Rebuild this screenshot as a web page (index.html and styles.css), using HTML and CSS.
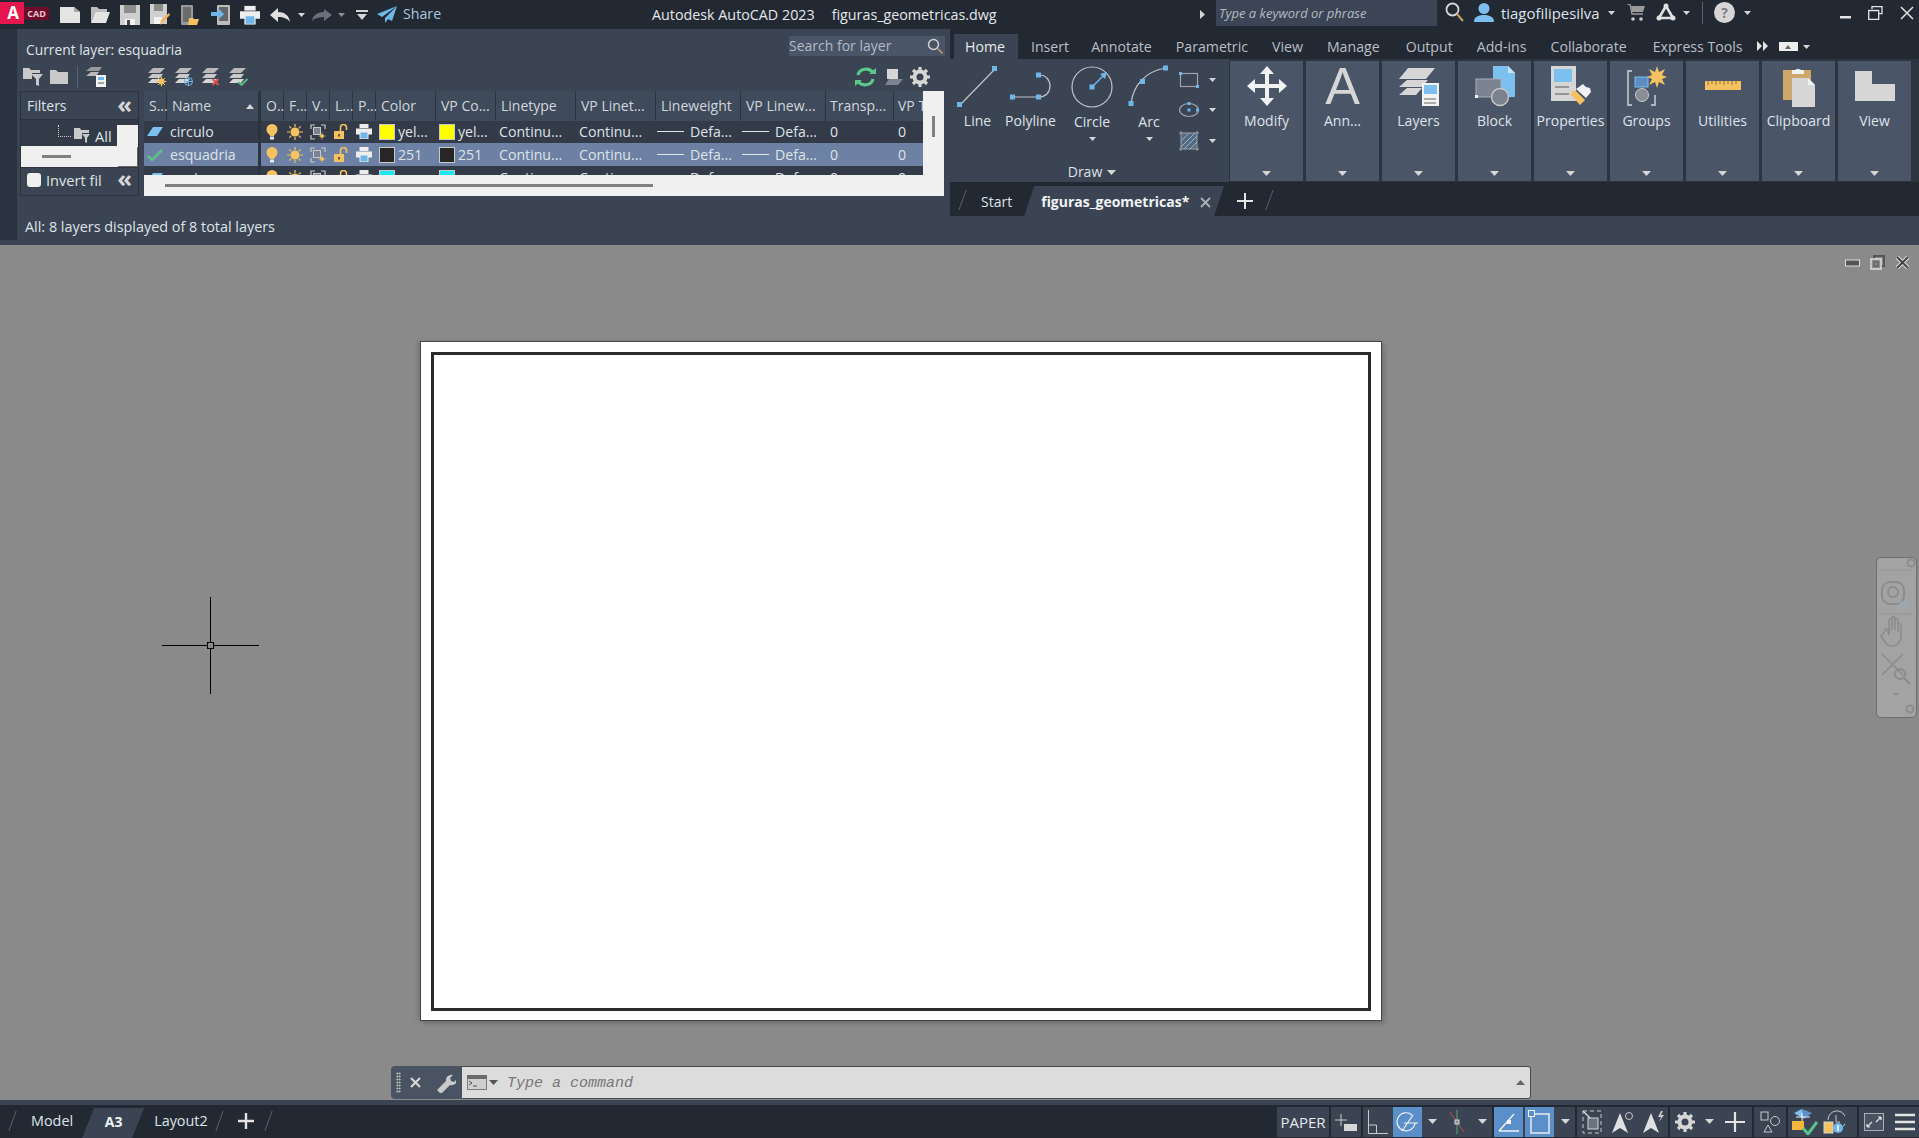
FILE: index.html
```html
<!DOCTYPE html>
<html lang="en">
<head>
<meta charset="utf-8">
<title>Autodesk AutoCAD 2023 - figuras_geometricas.dwg</title>
<link rel="stylesheet" href="styles.css">
</head>
<body>
<svg class="defs" width="0" height="0">
  <symbol id="stack" viewBox="0 0 20 20"><path d="M6 1h12l-5 5H1z" fill="#b9b9b9"/><path d="M5 7h11l-3 4H1z" fill="#c9c9c9"/><path d="M5 12h11l-3 4H1z" fill="#d6d6d6"/></symbol>
  <symbol id="bulb" viewBox="0 0 14 16"><circle cx="7" cy="5.5" r="5.5" fill="#f5c261"/><path d="M4 9h6l-1 3H5z" fill="#f5c261"/><rect x="5" y="12.5" width="4" height="3" fill="#e8e8e8"/></symbol>
  <symbol id="sun" viewBox="0 0 16 16"><circle cx="8" cy="8" r="4.5" fill="#f5c261"/><path d="M8 0v3M8 13v3M0 8h3M13 8h3M2.3 2.3l2 2M11.7 11.7l2 2M2.3 13.7l2-2M11.7 4.3l2-2" stroke="#f5c261" stroke-width="1.2"/></symbol>
  <symbol id="vpf" viewBox="0 0 16 16"><path d="M1 5V1h4M11 1h4v4M1 11v4h4" fill="none" stroke="#c9c9c9" stroke-width="1.2"/><rect x="3.500" y="3.500" width="7" height="7" fill="#7b8390" stroke="#c9c9c9"/><circle cx="12" cy="12" r="2" fill="#f5c261"/><path d="M12 8.500v1M12 14.500v1M8.500 12h1M14.500 12h1" stroke="#f5c261"/></symbol>
  <symbol id="lock" viewBox="0 0 14 15"><rect x="0" y="7" width="10" height="8" fill="#f5c261"/><path d="M6.500 7V3.500a3 3 0 0 1 6 0V6" fill="none" stroke="#f5c261" stroke-width="1.600"/><rect x="4" y="10" width="2" height="2.500" fill="#6d5a2e"/></symbol>
  <symbol id="printer" viewBox="0 0 16 15"><rect x="3.500" y="0" width="9" height="4" fill="#eee"/><rect x="0" y="4.500" width="16" height="6" fill="#eee"/><rect x="4" y="8" width="8" height="7" fill="#6fb7e9" stroke="#eee"/></symbol>
  <symbol id="arrowcaret" viewBox="0 0 9 5"><path d="M0 0h9L4.500 5z" fill="#d6d6d6"/></symbol>
</svg>

<header class="titlebar">
  <div class="qat">
    <span class="logo-a">A</span><span class="logo-cad">CAD</span>
    <span class="qb qb-first"><svg width="20" height="16" viewBox="0 0 20 16"><path d="M0 0h14l6 5v11H0z" fill="#e4e4e4"/><path d="M14 0v5h6z" fill="#a9a9a9"/></svg></span>
    <span class="qb"><svg width="20" height="16" viewBox="0 0 20 16"><path d="M1 0h6l2 2h8v3H5L1 16z" fill="#bdbdbd"/><path d="M5 5h15l-4 11H1z" fill="#e4e4e4"/></svg></span>
    <span class="qb"><svg width="20" height="20" viewBox="0 0 20 20"><path d="M0 0h20v20H0z" fill="#cfcfcf"/><rect x="4" y="0" width="12" height="8" fill="#8c8c8c"/><rect x="5" y="14" width="10" height="6" fill="#f2f2f2"/><rect x="7" y="15" width="3" height="5" fill="#444"/></svg></span>
    <span class="qb"><svg width="20" height="22" viewBox="0 0 20 22"><path d="M0 0h17v20H0z" fill="#cfcfcf"/><rect x="4" y="0" width="9" height="7" fill="#8c8c8c"/><rect x="4" y="13" width="8" height="7" fill="#f2f2f2"/><path d="M10 21l1-5 8-7 1 2-8 8z" fill="#f0b35a"/></svg></span>
    <span class="qb"><svg width="20" height="20" viewBox="0 0 20 20"><rect x="1" y="0" width="12" height="20" rx="1" fill="#9a9a9a"/><rect x="3" y="2" width="8" height="15" fill="#6c6c6c"/><path d="M9 13h4l1 1h5l-2 6H8z" fill="#f5c261"/></svg></span>
    <span class="qb qb-pub"><svg width="20" height="20" viewBox="0 0 20 20"><rect x="6" y="0" width="13" height="20" rx="1" fill="#bdbdbd"/><rect x="8" y="2" width="9" height="14" fill="#666"/><path d="M0 7h7V3l6 6-6 6v-4H0z" fill="#6fb7e9"/></svg></span>
    <span class="qb qb-print"><svg width="20" height="20" viewBox="0 0 16 15"><use href="#printer"/></svg></span>
    <span class="qb qb-undo"><svg width="20" height="14" viewBox="0 0 20 14"><path d="M8 0v4c6 0 11 3 12 10-2-3-6-5-12-5v5L0 7z" fill="#e0e0e0"/></svg></span>
    <svg class="qc qc-u" width="7" height="4" viewBox="0 0 9 5"><use href="#arrowcaret"/></svg>
    <span class="qb qb-redo"><svg width="20" height="12" viewBox="0 0 20 12"><path d="M12 0v3C6 3 1 6 0 12c3-3 7-4 12-4v4l8-6z" fill="#6a717c"/></svg></span>
    <svg class="qc" width="7" height="4" viewBox="0 0 9 5"><path d="M0 0h9L4.500 5z" fill="#8a909a"/></svg>
    <span class="qa"><svg width="12" height="10" viewBox="0 0 12 10"><rect width="12" height="2" fill="#d6d6d6"/><path d="M1 4h10L6 10z" fill="#d6d6d6"/></svg></span>
    <svg class="share-ic" width="20" height="17" viewBox="0 0 20 17"><path d="M20 0L0 8l5 3L20 0 8 12v5l3-4 4 2z" fill="#6fb7e9"/></svg>
    <span class="share">Share</span>
  </div>
  <div class="tb-title"><span class="tb-app">Autodesk AutoCAD 2023</span><span>figuras_geometricas.dwg</span></div>
  <svg class="tb-arrow" width="5" height="9" viewBox="0 0 5 9"><path d="M0 0l5 4.500L0 9z" fill="#d6d6d6"/></svg>
  <div class="tb-search">Type a keyword or phrase</div>
  <svg class="tb-mag" width="19" height="20" viewBox="0 0 19 20"><circle cx="7.500" cy="7.500" r="6" fill="none" stroke="#d6d6d6" stroke-width="1.800"/><path d="M12 12l6 7" stroke="#c8a35e" stroke-width="2"/></svg>
  <svg class="tb-user" width="20" height="19" viewBox="0 0 20 19"><circle cx="10" cy="5.500" r="5.500" fill="#7cc0f0"/><path d="M0 19c0-5 4-7 10-7s10 2 10 7z" fill="#7cc0f0"/></svg>
  <span class="tb-name">tiagofilipesilva</span>
  <svg class="tb-c1" width="7" height="4" viewBox="0 0 9 5"><use href="#arrowcaret"/></svg>
  <svg class="tb-cart" width="18" height="17" viewBox="0 0 18 17"><path d="M0 0h3l2 10h11" fill="none" stroke="#9a9a9a" stroke-width="1.400"/><path d="M4 2h14l-2 6H5z" fill="#9a9a9a"/><circle cx="6" cy="15" r="1.800" fill="#c9c9c9"/><circle cx="14" cy="15" r="1.800" fill="#c9c9c9"/></svg>
  <svg class="tb-a360" width="20" height="18" viewBox="0 0 20 18"><path d="M10 3L3 15h14z" fill="none" stroke="#e0e0e0" stroke-width="2.600"/><circle cx="10" cy="3" r="2.500" fill="#e0e0e0"/><circle cx="3" cy="15" r="2.500" fill="#e0e0e0"/><circle cx="17" cy="15" r="2.500" fill="#e0e0e0"/></svg>
  <svg class="tb-c2" width="7" height="4" viewBox="0 0 9 5"><use href="#arrowcaret"/></svg>
  <span class="tb-sep"></span>
  <span class="tb-help">?</span>
  <svg class="tb-c3" width="7" height="4" viewBox="0 0 9 5"><use href="#arrowcaret"/></svg>
  <span class="win-btns">
    <svg width="11" height="3" viewBox="0 0 11 3"><rect width="11" height="2.500" fill="#e4e4e4"/></svg>
    <svg width="15" height="14" viewBox="0 0 15 14"><path d="M4 3V.7h10v7h-3M.7 4.500h10v8.800H.7z" fill="none" stroke="#e4e4e4" stroke-width="1.300"/></svg>
    <svg width="14" height="14" viewBox="0 0 14 14"><path d="M1 1l12 12M13 1L1 13" stroke="#e4e4e4" stroke-width="1.500"/></svg>
  </span>
</header>

<section class="upper">
  <div class="strip"><span class="strip-grip"></span></div>

  <aside class="palette">
    <div class="pal-top">
      <span class="cur-layer">Current layer: esquadria</span>
      <div class="pal-search"><span>Search for layer</span>
        <svg width="16" height="16" viewBox="0 0 16 16"><circle cx="6.500" cy="6.500" r="5" fill="none" stroke="#d6d6d6" stroke-width="1.400"/><path d="M10.500 10.500l5 5" stroke="#b39a68" stroke-width="1.600"/></svg>
      </div>
    </div>
    <div class="pal-tools">
      <svg width="20" height="20" viewBox="0 0 20 20"><path d="M0 1h6l2 2h9v3H9v6H0z" fill="#c9c9c9"/><path d="M8 7h12l-4 5v7l-3-1v-6z" fill="#c9c9c9"/></svg>
      <svg class="t-folder" width="18" height="14" viewBox="0 0 18 14"><path d="M0 0h6l2 2h10v12H0z" fill="#c9c9c9"/></svg>
      <span class="t-sep"></span>
      <svg width="20" height="20" viewBox="0 0 20 20"><path d="M5 0h11l-3 4H0z" fill="#9a9a9a"/><path d="M5 5h8l-3 4H0z" fill="#b9b9b9"/><rect x="10" y="8" width="10" height="12" fill="#f2f2f2"/><rect x="12" y="10" width="6" height="3" fill="#6fb7e9"/><path d="M12 16h6" stroke="#555"/></svg>
      <svg class="t-new" width="20" height="20" viewBox="0 0 20 20"><use href="#stack"/><circle cx="14.500" cy="14.500" r="3" fill="#f5c261"/><path d="M14.500 9.500v10M9.500 14.500h10M11 11l7 7M18 11l-7 7" stroke="#f5c261"/></svg>
      <svg width="20" height="20" viewBox="0 0 20 20"><use href="#stack"/><circle cx="14.500" cy="14.500" r="4" fill="none" stroke="#6fb7e9"/><path d="M14.500 10.500v8M10.500 14.500h8" stroke="#6fb7e9"/></svg>
      <svg width="20" height="20" viewBox="0 0 20 20"><use href="#stack"/><path d="M11.500 12l6 6M17.500 12l-6 6" stroke="#d9534f" stroke-width="2"/></svg>
      <svg width="20" height="20" viewBox="0 0 20 20"><use href="#stack"/><path d="M10.500 15l3 3 6-6" fill="none" stroke="#5bc08a" stroke-width="1.800"/></svg>
      <span class="t-spring"></span>
      <svg width="21" height="20" viewBox="0 0 21 20"><path d="M3 8a8 7 0 0 1 15-2" fill="none" stroke="#5bc98a" stroke-width="3.200"/><path d="M18 12a8 7 0 0 1-15 2" fill="none" stroke="#5bc98a" stroke-width="3.200"/><path d="M14 7h7V1zM7 13H0v6z" fill="#5bc98a"/></svg>
      <svg class="t-vp" width="18" height="16" viewBox="0 0 18 16"><rect x="2" y="0" width="11" height="10" fill="#d6d6d6"/><path d="M4 10h14l-5 6H0z" fill="#7b8390"/></svg>
      <svg class="t-gear" width="20" height="20" viewBox="0 0 20 20"><circle cx="10" cy="10" r="5.500" fill="none" stroke="#d6d6d6" stroke-width="4"/><path d="M10 0v20M0 10h20M3 3l14 14M17 3L3 17" stroke="#d6d6d6" stroke-width="3.200" stroke-dasharray="3.500 13 3.500 0"/></svg>
    </div>

    <div class="pal-body">
      <div class="filters">
        <div class="f-head"><span>Filters</span><span class="dbl">&laquo;</span></div>
        <div class="f-tree">
          <div class="f-tree-top">
            <span class="f-dots"></span>
            <svg class="f-fold" width="16" height="15" viewBox="0 0 16 15"><path d="M0 0h6l1 2h8v3H8v6H0z" fill="#c9c9c9"/><path d="M8 6h8l-3 4v5l-2-1v-4z" fill="#c9c9c9"/></svg>
            <span class="f-all">All</span>
            <span class="f-patch"></span>
          </div>
          <div class="f-tree-bot"><span class="f-thumb"></span><span class="f-corner"></span></div>
        </div>
        <div class="f-inv"><span class="f-check"></span><span class="f-inv-t">Invert fil</span><span class="dbl">&laquo;</span></div>
      </div>

      <div class="grid-wrap">
        <div class="table">
          <div class="row head">
            <span>S...</span><span class="name-h">Name<i class="sort"></i></span><b></b><span>O..</span><span>F...</span><span>V..</span><span>L...</span><span>P...</span><span>Color</span><span>VP Co...</span><span>Linetype</span><span>VP Linet...</span><span>Lineweight</span><span>VP Linew...</span><span>Transp...</span><span class="vpt">VP T</span>
          </div>
          <div class="row r1">
            <span class="ic"><svg width="16" height="9" viewBox="0 0 16 9"><path d="M6 0h10L10 9H0z" fill="#7cc0f0"/></svg></span><span class="nm">circulo</span><b></b>
            <span class="ic"><svg width="14" height="16"><use href="#bulb"/></svg></span><span class="ic"><svg width="16" height="16"><use href="#sun"/></svg></span><span class="ic"><svg width="16" height="16"><use href="#vpf"/></svg></span><span class="ic"><svg width="14" height="15"><use href="#lock"/></svg></span><span class="ic"><svg width="16" height="15"><use href="#printer"/></svg></span>
            <span class="col"><i class="sw yel"></i>yel...</span><span class="col"><i class="sw yel"></i>yel...</span><span>Continu...</span><span>Continu...</span><span class="lw"><i class="ln"></i>Defa...</span><span class="lw"><i class="ln"></i>Defa...</span><span>0</span><span>0</span>
          </div>
          <div class="row r2">
            <span class="ic"><svg width="16" height="12" viewBox="0 0 16 12"><path d="M1 7l4 4L15 1" fill="none" stroke="#5bc08a" stroke-width="2.600"/></svg></span><span class="nm">esquadria</span><b></b>
            <span class="ic"><svg width="14" height="16"><use href="#bulb"/></svg></span><span class="ic"><svg width="16" height="16"><use href="#sun"/></svg></span><span class="ic"><svg width="16" height="16"><use href="#vpf"/></svg></span><span class="ic"><svg width="14" height="15"><use href="#lock"/></svg></span><span class="ic"><svg width="16" height="15"><use href="#printer"/></svg></span>
            <span class="col"><i class="sw blk"></i>251</span><span class="col"><i class="sw blk"></i>251</span><span>Continu...</span><span>Continu...</span><span class="lw"><i class="ln"></i>Defa...</span><span class="lw"><i class="ln"></i>Defa...</span><span>0</span><span>0</span>
          </div>
          <div class="row r1">
            <span class="ic"><svg width="16" height="9" viewBox="0 0 16 9"><path d="M6 0h10L10 9H0z" fill="#7cc0f0"/></svg></span><span class="nm">contorno</span><b></b>
            <span class="ic"><svg width="14" height="16"><use href="#bulb"/></svg></span><span class="ic"><svg width="16" height="16"><use href="#sun"/></svg></span><span class="ic"><svg width="16" height="16"><use href="#vpf"/></svg></span><span class="ic"><svg width="14" height="15"><use href="#lock"/></svg></span><span class="ic"><svg width="16" height="15"><use href="#printer"/></svg></span>
            <span class="col"><i class="sw cya"></i>cyan</span><span class="col"><i class="sw cya"></i>cyan</span><span>Continu...</span><span>Continu...</span><span class="lw"><i class="ln"></i>Defa...</span><span class="lw"><i class="ln"></i>Defa...</span><span>0</span><span>0</span>
          </div>
        </div>
        <div class="vscroll"><span class="vthumb"></span></div>
        <div class="hscroll"><span class="hthumb"></span></div>
      </div>
    </div>
    <div class="pal-status">All: 8 layers displayed of 8 total layers</div>
  </aside>

  <div class="ribbon">
    <nav class="rtabs">
      <span class="rtab on">Home</span><span class="rtab">Insert</span><span class="rtab rt-ann">Annotate</span><span class="rtab">Parametric</span><span class="rtab">View</span><span class="rtab">Manage</span><span class="rtab rt-out">Output</span><span class="rtab">Add-ins</span><span class="rtab">Collaborate</span><span class="rtab rt-exp">Express Tools</span>
      <svg class="r-more" width="11" height="10" viewBox="0 0 11 10"><path d="M0 0l5 5-5 5zM6 0l5 5-5 5z" fill="#e4e4e4"/></svg>
      <span class="r-min"><i></i></span>
      <svg class="r-minc" width="7" height="4" viewBox="0 0 9 5"><use href="#arrowcaret"/></svg>
    </nav>
    <div class="rpanels">
      <div class="draw">
        <div class="draw-tools">
          <div class="tool t1">
            <svg width="42" height="44" viewBox="0 0 42 44"><path d="M3 40L38 4" stroke="#bfc4ca" stroke-width="1.200"/><rect x="0" y="37" width="5" height="5" fill="#6fb7e9"/><rect x="35" y="1" width="5" height="5" fill="#6fb7e9"/></svg>
            <span>Line</span>
          </div>
          <div class="tool t2">
            <svg width="42" height="44" viewBox="0 0 42 44"><path d="M3 32h26c7 0 11-5 11-11s-4-11-11-11" fill="none" stroke="#bfc4ca" stroke-width="1.200"/><rect x="0" y="29.500" width="5" height="5" fill="#6fb7e9"/><rect x="26" y="29.500" width="5" height="5" fill="#6fb7e9"/><rect x="26" y="7.500" width="5" height="5" fill="#6fb7e9"/></svg>
            <span>Polyline</span>
          </div>
          <div class="tool t3">
            <svg width="42" height="44" viewBox="0 0 42 44"><circle cx="21" cy="22" r="20" fill="none" stroke="#bfc4ca" stroke-width="1.200"/><path d="M21 22L32 11" stroke="#6fb7e9" stroke-width="1.400"/><rect x="18.500" y="19.500" width="5" height="5" fill="#6fb7e9"/><path d="M36 7l-2 7-5-5z" fill="#6fb7e9"/></svg>
            <span>Circle</span><svg class="t-car" width="7" height="4" viewBox="0 0 9 5"><use href="#arrowcaret"/></svg>
          </div>
          <div class="tool t4">
            <svg width="42" height="44" viewBox="0 0 42 44"><path d="M3 39C5 20 18 6 38 3" fill="none" stroke="#bfc4ca" stroke-width="1.200"/><rect x="0.500" y="36" width="5" height="5" fill="#6fb7e9"/><rect x="12" y="14" width="5" height="5" fill="#6fb7e9"/><rect x="35" y="0.500" width="5" height="5" fill="#6fb7e9"/></svg>
            <span>Arc</span><svg class="t-car" width="7" height="4" viewBox="0 0 9 5"><use href="#arrowcaret"/></svg>
          </div>
          <div class="t-small">
            <div class="ts-row"><svg width="20" height="18" viewBox="0 0 20 18"><rect x="1.500" y="2.500" width="17" height="13" fill="none" stroke="#9ea4ac" stroke-width="1.200"/><rect x="0" y="1" width="3" height="3" fill="#6fb7e9"/><rect x="17" y="14" width="3" height="3" fill="#6fb7e9"/></svg><svg class="ts-car" width="7" height="4" viewBox="0 0 9 5"><use href="#arrowcaret"/></svg></div>
            <div class="ts-row"><svg width="20" height="18" viewBox="0 0 20 18"><ellipse cx="10" cy="9" rx="9.500" ry="6.500" fill="none" stroke="#9ea4ac" stroke-width="1.200"/><rect x="8.500" y="1" width="3" height="3" fill="#6fb7e9"/><rect x="8.500" y="7.500" width="3" height="3" fill="#6fb7e9"/><rect x="17" y="7.500" width="3" height="3" fill="#6fb7e9"/></svg><svg class="ts-car" width="7" height="4" viewBox="0 0 9 5"><use href="#arrowcaret"/></svg></div>
            <div class="ts-row"><svg width="20" height="20" viewBox="0 0 20 20"><rect x="2" y="2" width="16" height="16" fill="#56697f"/><path d="M2 10l8-8M2 16L16 2M5 18L18 5M11 18l7-7" stroke="#8fb6d6"/><path d="M0 2h20M0 18h20M2 0v20M18 0v20" stroke="#9ea4ac"/></svg><svg class="ts-car" width="7" height="4" viewBox="0 0 9 5"><use href="#arrowcaret"/></svg></div>
          </div>
        </div>
        <div class="draw-foot">Draw <svg width="9" height="5" viewBox="0 0 9 5"><use href="#arrowcaret"/></svg></div>
      </div>

      <div class="pnl">
        <div class="pnl-ic"><svg width="40" height="40" viewBox="0 0 40 40"><path d="M20 0l7 8h-5v10h10v-5l8 7-8 7v-5H22v10h5l-7 8-7-8h5V22H8v5l-8-7 8-7v5h10V8h-5z" fill="#f2f2f2"/></svg></div>
        <span>Modify</span><svg class="car" width="9" height="5" viewBox="0 0 9 5"><use href="#arrowcaret"/></svg>
      </div>
      <div class="pnl">
        <div class="pnl-ic"><span class="big-a">A</span></div>
        <span>Ann...</span><svg class="car" width="9" height="5" viewBox="0 0 9 5"><use href="#arrowcaret"/></svg>
      </div>
      <div class="pnl">
        <div class="pnl-ic"><svg width="40" height="40" viewBox="0 0 40 40"><path d="M9 2h27l-9 11H0z" fill="#d6d6d6"/><path d="M8 14h21l-6 7H0z" fill="#d6d6d6"/><path d="M8 22h15l-6 7H0z" fill="#d6d6d6"/><rect x="23" y="17" width="17" height="23" fill="#f2f2f2"/><rect x="25" y="19" width="13" height="9" fill="#7cc0f0"/><path d="M25 33h12M25 37h12" stroke="#666"/></svg></div>
        <span>Layers</span><svg class="car" width="9" height="5" viewBox="0 0 9 5"><use href="#arrowcaret"/></svg>
      </div>
      <div class="pnl">
        <div class="pnl-ic"><svg width="40" height="42" viewBox="0 0 40 42"><path d="M18 1h15l7 7v24H18z" fill="#7cc0f0"/><path d="M33 1l7 7h-7z" fill="#c6e4f8"/><rect x="1" y="14" width="25" height="18" fill="#7b8390" stroke="#a9aeb5"/><circle cx="25" cy="32" r="8.500" fill="#7b8390" stroke="#c9c9c9" stroke-width="1.400"/><rect x="0" y="30" width="3" height="3" fill="#f2f2f2"/></svg></div>
        <span>Block</span><svg class="car" width="9" height="5" viewBox="0 0 9 5"><use href="#arrowcaret"/></svg>
      </div>
      <div class="pnl">
        <div class="pnl-ic"><svg width="40" height="42" viewBox="0 0 40 42"><rect x="0" y="1" width="25" height="35" fill="#d6d6d6"/><rect x="3" y="4" width="18" height="13" fill="#7cc0f0"/><path d="M4 22h14M4 29h14" stroke="#555" stroke-width="1.200"/><path d="M19 29l5-4 10 10-5 5z" fill="#f5c261"/><path d="M25 24l7-5 3 3 4 1 1 4-5 6z" fill="#f2f2f2"/></svg></div>
        <span>Properties</span><svg class="car" width="9" height="5" viewBox="0 0 9 5"><use href="#arrowcaret"/></svg>
      </div>
      <div class="pnl">
        <div class="pnl-ic"><svg width="40" height="42" viewBox="0 0 40 42"><path d="M5 6H1v34h4M28 30v10h-4" fill="none" stroke="#d6d6d6" stroke-width="1.400"/><rect x="8" y="12" width="13" height="10" fill="#5b8fc2" stroke="#7cc0f0"/><circle cx="15" cy="30" r="6.500" fill="#8a8f97" stroke="#c9c9c9"/><path d="M30 1l2 6 6-3-3 6 5 2-5 2 3 6-6-3-2 6-2-6-6 3 3-6-5-2 5-2-3-6 6 3z" fill="#f5c261"/></svg></div>
        <span>Groups</span><svg class="car" width="9" height="5" viewBox="0 0 9 5"><use href="#arrowcaret"/></svg>
      </div>
      <div class="pnl">
        <div class="pnl-ic"><svg width="36" height="9" viewBox="0 0 36 9"><rect width="36" height="9" fill="#f5c261"/><path d="M3 0v4M7 0v3M11 0v4M15 0v3M19 0v4M23 0v3M27 0v4M31 0v3" stroke="#8f6f2c"/></svg></div>
        <span>Utilities</span><svg class="car" width="9" height="5" viewBox="0 0 9 5"><use href="#arrowcaret"/></svg>
      </div>
      <div class="pnl">
        <div class="pnl-ic"><svg width="32" height="42" viewBox="0 0 32 42"><rect x="0" y="5" width="28" height="30" fill="#cfa76a"/><path d="M9 5h3a4 3 0 0 1 6 0h3v4H9z" fill="#f2f2f2"/><path d="M9 13h16l7 7v22H9z" fill="#d6d6d6"/><path d="M25 13l7 7h-7z" fill="#f2f2f2"/></svg></div>
        <span>Clipboard</span><svg class="car" width="9" height="5" viewBox="0 0 9 5"><use href="#arrowcaret"/></svg>
      </div>
      <div class="pnl">
        <div class="pnl-ic"><svg width="40" height="30" viewBox="0 0 40 30"><path d="M0 0h17v13h23v17H0z" fill="#d6d6d6"/></svg></div>
        <span>View</span><svg class="car" width="9" height="5" viewBox="0 0 9 5"><use href="#arrowcaret"/></svg>
      </div>
    </div>
    <div class="dtabs">
      <i class="slash"></i>
      <span class="dt-start">Start</span>
      <div class="dt-on"><span>figuras_geometricas*</span><svg width="11" height="11" viewBox="0 0 11 11"><path d="M1 1l9 9M10 1l-9 9" stroke="#a9aeb5" stroke-width="2"/></svg></div>
      <svg class="dt-plus" width="16" height="16" viewBox="0 0 16 16"><path d="M8 0v16M0 8h16" stroke="#e4e4e4" stroke-width="2"/></svg>
      <i class="slash s2"></i>
    </div>
  </div>
</section>

<main class="canvas">
  <div class="paper"><div class="frame"></div></div>
  <div class="cross"><i class="cr-h"></i><i class="cr-v"></i><i class="cr-b"></i></div>
  <div class="vp-ctl">
    <svg width="15" height="9" viewBox="0 0 15 9"><rect x="0.500" y="2" width="14" height="6" fill="#555" stroke="#ddd"/></svg>
    <svg width="15" height="15" viewBox="0 0 15 15"><rect x="4" y="1" width="10" height="10" fill="none" stroke="#555" stroke-width="2"/><rect x="1" y="4" width="10" height="10" fill="#8a8a8a" stroke="#ddd" stroke-width="1.500"/><rect x="4" y="7" width="4" height="4" fill="none" stroke="#555"/></svg>
    <svg width="15" height="13" viewBox="0 0 15 13"><path d="M2 1l11 11M13 1L2 12" stroke="#ddd" stroke-width="4"/><path d="M2 1l11 11M13 1L2 12" stroke="#444" stroke-width="2"/></svg>
  </div>
  <div class="navbar">
    <svg width="41" height="161" viewBox="0 0 41 161">
      <circle cx="35" cy="6" r="3.500" fill="none" stroke="#8c8c8c" stroke-width="2"/>
      <path d="M3 13h34" stroke="#949494"/>
      <rect x="6" y="25" width="22" height="22" rx="8" fill="none" stroke="#8c8c8c" stroke-width="2"/>
      <circle cx="17" cy="35" r="5" fill="none" stroke="#8c8c8c" stroke-width="2"/>
      <text x="21" y="52" font-family="Open Sans" font-size="10" font-weight="700" fill="#98aabd">2D</text>
      <path d="M3 57h34" stroke="#949494"/>
      <path d="M9 74c0-3 2-3 3 0l1 4V64c0-3 3-3 3 0v9-11c0-3 3-3 3 0v11-9c0-3 3-3 3 0v11-6c0-3 3-3 3 0v10c0 6-4 10-9 10-6 0-7-4-11-10z" fill="none" stroke="#8c8c8c" stroke-width="1.600"/>
      <path d="M6 97l21 21M27 97L6 118" stroke="#8c8c8c" stroke-width="1.600"/>
      <circle cx="24" cy="117" r="5" fill="none" stroke="#8c8c8c" stroke-width="2"/>
      <path d="M28 121l6 6" stroke="#8c8c8c" stroke-width="2.400"/>
      <path d="M17 136h6l-3 3z" fill="#8c8c8c"/>
      <circle cx="34" cy="152" r="3.500" fill="none" stroke="#8c8c8c" stroke-width="2"/>
    </svg>
  </div>
  <div class="cmd">
    <div class="cmd-tools">
      <span class="cmd-grip"></span>
      <svg width="11" height="11" viewBox="0 0 11 11"><path d="M1 1l9 9M10 1l-9 9" stroke="#d6d6d6" stroke-width="2.200"/></svg>
      <svg width="20" height="20" viewBox="0 0 20 20"><path d="M1 17l9-9a5.500 5.500 0 0 1 7-6l-3 3 1 3 3 1 3-3a5.500 5.500 0 0 1-7 6l-9 9z" fill="#c9c9c9"/></svg>
    </div>
    <div class="cmd-input">
      <svg width="20" height="15" viewBox="0 0 20 15"><rect x="0.500" y="0.500" width="19" height="14" fill="#cfcfcf" stroke="#7c7c7c"/><rect x="0" y="0" width="20" height="4" fill="#6b6b6b"/><path d="M2 6l3 2-3 2M6 11h4" fill="none" stroke="#555"/></svg>
      <svg class="cmd-c" width="9" height="5" viewBox="0 0 9 5"><path d="M0 0h9L4.500 5z" fill="#555"/></svg>
      <span class="cmd-t">Type a command</span>
      <svg class="cmd-up" width="9" height="5" viewBox="0 0 9 5"><path d="M0 5h9L4.500 0z" fill="#666"/></svg>
    </div>
  </div>
</main>

<footer class="status">
  <div class="ltabs">
    <i class="slash"></i><span class="lt lt-m">Model</span><span class="lt-on"><span>A3</span></span><span class="lt lt-2">Layout2</span><i class="slash"></i>
    <svg class="lt-plus" width="16" height="16" viewBox="0 0 16 16"><path d="M8 0v16M0 8h16" stroke="#e4e4e4" stroke-width="2.400"/></svg>
    <i class="slash"></i>
  </div>
  <div class="sgroups">
    <div class="sg g1">PAPER</div>
    <div class="sg g2"><svg width="22" height="20" viewBox="0 0 22 20"><path d="M6 2v12M0 8h12" stroke="#c9c9c9"/><rect x="9" y="12" width="13" height="7" fill="#d6d6d6"/></svg></div>
    <div class="sg g3">
      <span class="sb"><svg width="20" height="24" viewBox="0 0 20 24"><path d="M.5 0v23.500H20M.5 15h8v8" fill="none" stroke="#c9c9c9"/></svg></span>
      <span class="sb on"><svg width="22" height="22" viewBox="0 0 22 22"><path d="M16 4A9 9 0 1 0 19 12" fill="none" stroke="#f2f2f2" stroke-width="1.200"/><path d="M6 20L17 4M8 12h14" stroke="#f2f2f2" stroke-width="1.200"/></svg></span>
      <span class="sc"><svg width="9" height="5" viewBox="0 0 9 5"><use href="#arrowcaret"/></svg></span>
      <span class="sb"><svg width="18" height="24" viewBox="0 0 18 24"><path d="M2 2l14 20" stroke="#c0504d"/><path d="M9 0v24" stroke="#57a67c"/><rect x="7" y="10" width="4" height="4" fill="#8a8f97" stroke="#d6d6d6"/></svg></span>
      <span class="sc"><svg width="9" height="5" viewBox="0 0 9 5"><use href="#arrowcaret"/></svg></span>
    </div>
    <div class="sg g4">
      <span class="sb on"><svg width="22" height="22" viewBox="0 0 22 22"><path d="M1 20h20M1 20L16 3" fill="none" stroke="#f2f2f2" stroke-width="1.400"/><rect x="9" y="9" width="4" height="4" fill="#f2f2f2"/></svg></span>
      <span class="sb on"><svg width="22" height="24" viewBox="0 0 22 24"><rect x="3" y="4" width="18" height="19" fill="none" stroke="#f2f2f2" stroke-width="1.400"/><rect x="0.500" y="0.500" width="6" height="6" fill="#5b8fc9" stroke="#f2f2f2"/></svg></span>
      <span class="sc"><svg width="9" height="5" viewBox="0 0 9 5"><use href="#arrowcaret"/></svg></span>
    </div>
    <div class="sg g5">
      <span class="sb"><svg width="20" height="24" viewBox="0 0 20 24"><path d="M1 1h18v22H1z" fill="none" stroke="#c9c9c9" stroke-dasharray="4 3"/><rect x="6" y="8" width="10" height="11" fill="#6b7381" stroke="#d6d6d6"/><path d="M1 1l7 7" stroke="#d6d6d6" stroke-width="1.400"/></svg></span>
      <span class="sb"><svg width="22" height="24" viewBox="0 0 22 24"><path d="M8 3l8 20-8-5-8 5z" fill="#e0e0e0"/><circle cx="17" cy="6" r="3.500" fill="none" stroke="#c9c9c9"/></svg></span>
      <span class="sb"><svg width="22" height="24" viewBox="0 0 22 24"><path d="M8 3l8 20-8-5-8 5z" fill="#e0e0e0"/><path d="M18 1l-3 6h3l-2 5 5-7h-3l2-4z" fill="#c9c9c9"/></svg></span>
    </div>
    <div class="sg g6">
      <span class="sb"><svg width="20" height="20" viewBox="0 0 20 20"><circle cx="10" cy="10" r="5.500" fill="none" stroke="#d6d6d6" stroke-width="4"/><path d="M10 0v20M0 10h20M3 3l14 14M17 3L3 17" stroke="#d6d6d6" stroke-width="3.200" stroke-dasharray="3.500 13 3.500 0"/></svg></span>
      <span class="sc"><svg width="9" height="5" viewBox="0 0 9 5"><use href="#arrowcaret"/></svg></span>
      <span class="sb"><svg width="20" height="20" viewBox="0 0 20 20"><path d="M10 0v20M0 10h20" stroke="#e4e4e4" stroke-width="2.200"/></svg></span>
    </div>
    <div class="sg g7"><svg width="20" height="22" viewBox="0 0 20 22"><rect x="1" y="1" width="7" height="8" fill="none" stroke="#c9c9c9"/><circle cx="15" cy="10" r="4.500" fill="none" stroke="#c9c9c9"/><path d="M4 21h8l-4-7z" fill="none" stroke="#c9c9c9"/></svg></div>
    <div class="sg g8">
      <span class="sb"><svg width="26" height="26" viewBox="0 0 26 26"><path d="M10 0l10 4-8 6z" fill="#5b8fc9"/><path d="M2 4l8-4 2 10z" fill="#7cc0f0"/><path d="M10 4v10M4 8h14" stroke="#f2f2f2"/><rect x="0" y="12" width="12" height="9" fill="#f5b73b"/><path d="M11 19l5 6 9-12" fill="none" stroke="#5bc08a" stroke-width="3"/></svg></span>
      <span class="sb"><svg width="22" height="24" viewBox="0 0 22 24"><path d="M5 10A9 9 0 1 1 18 18" fill="none" stroke="#c9c9c9"/><path d="M13 5v7h4" fill="none" stroke="#c9c9c9"/><rect x="1" y="12" width="9" height="11" fill="#f5c261" stroke="#d6d6d6"/><circle cx="15" cy="18" r="5" fill="#6fb7e9"/><rect x="14.300" y="15" width="1.400" height="6" fill="#fff"/></svg></span>
    </div>
    <div class="sg g9">
      <span class="sb"><svg width="20" height="18" viewBox="0 0 20 18"><rect x="0.500" y="0.500" width="19" height="17" fill="#4a5361" stroke="#a9aeb5"/><path d="M3 14l5-5M3 14v-3M3 14h3M17 4l-5 5M17 4v3M17 4h-3" stroke="#e4e4e4" stroke-width="1.200" fill="none"/></svg></span>
      <span class="sb"><svg width="20" height="18" viewBox="0 0 20 18"><path d="M0 2h20M0 9h20M0 16h20" stroke="#e4e4e4" stroke-width="2.400"/></svg></span>
    </div>
  </div>
</footer>
</body>
</html>
```

FILE: styles.css
```css
* { box-sizing: border-box; }
html, body { margin: 0; padding: 0; }
body {
  width: 1919px; height: 1138px; overflow: hidden;
  display: flex; flex-direction: column;
  background: #222933;
  font-family: "Open Sans", "Liberation Sans", sans-serif;
  font-size: 14px; line-height: 18px; color: #dfe3e8;
}
svg { display: block; flex: none; }
.defs { position: absolute; }
i { font-style: normal; }

/* title bar */
.titlebar { height: 29px; display: flex; align-items: center; background: #222933; flex: none; }
.qat { width: 652px; display: flex; align-items: center; flex: none; height: 29px; }
.logo-a { width: 24px; height: 22px; background: #e6174f; color: #fff; font-weight: 700; font-size: 17px; text-align: center; line-height: 22px; margin-top: -3px; padding-left: 2px; }
.logo-cad { width: 25px; height: 13px; margin-top: -3px; background: #6e0c2b; color: #e9c6cf; font-weight: 700; font-size: 9px; line-height: 13px; text-align: center; }
.qb { width: 30px; display: flex; justify-content: center; }
.qb-first { margin-left: 6px; }
.qb-pub { margin-left: 1px; }
.qb-print { margin-left: -1px; }
.qc { margin: 0 1px; }
.qc-u { margin-left: 3px; }
.qb-redo { margin-left: 1px; }
.qa { margin-left: 10px; }
.share-ic { margin-left: 9px; }
.share { margin-left: 6px; margin-top: -2px; color: #a9c8de; font-size: 14.2px; }
.tb-title { width: 548px; display: flex; font-size: 14.3px; color: #e4e7ea; flex: none; }
.tb-app { margin-right: 17px; }
.tb-search { margin-left: 11px; width: 221px; height: 26px; margin-top: -3px; padding-left: 3px; background: #3c4555; color: #b4bac3; font-size: 13px; font-style: italic; line-height: 26px; flex: none; }
.tb-mag { margin-left: 8px; margin-top: -5px; }
.tb-user { margin-left: 10px; margin-top: -4px; }
.tb-name { margin-left: 7px; width: 100px; margin-top: -3px; font-size: 14.9px; white-space: nowrap; }
.tb-c1 { margin-left: 7px; margin-top: -4px; }
.tb-cart { margin-left: 12px; margin-top: -4px; }
.tb-a360 { margin-left: 11px; margin-top: -5px; }
.tb-c2 { margin-left: 7px; margin-top: -4px; }
.tb-sep { width: 1px; height: 22px; background: #5a626e; margin-left: 12px; margin-top: -4px; }
.tb-help { margin-left: 11px; width: 21px; height: 21px; border-radius: 50%; background: #d6d6d6; color: #7c7c7c; font-weight: 700; font-size: 14px; line-height: 21px; text-align: center; margin-top: -4px; }
.tb-c3 { margin-left: 9px; margin-top: -4px; }
.win-btns { margin-left: auto; width: 79px; padding-right: 5px; display: flex; align-items: center; justify-content: space-between; margin-top: -3px; }
.win-btns svg:first-child { margin-top: 8px; }

/* upper area */
.upper { height: 216px; display: flex; background: #3b4453; flex: none; }
.strip { width: 17px; height: 211px; background: #2b3340; flex: none; padding: 7px 0 0 3px; }
.strip-grip { display: block; width: 3px; height: 9px; background-image: radial-gradient(#7b8390 40%, transparent 45%); background-size: 1.500px 2px; }

/* palette */
.palette { width: 933px; height: 211px; flex: none; background: #3b4453; border-bottom-left-radius: 6px; padding-left: 3px; display: flex; flex-direction: column; }
.pal-top { display: flex; align-items: flex-start; height: 20px; margin-top: 6px; }
.cur-layer { margin: 6px 0 0 6px; font-size: 13.8px; }
.pal-search { margin: 1px 5px 0 auto; width: 156px; height: 20px; background: #4a5568; display: flex; align-items: center; justify-content: space-between; color: #b4bac3; padding-right: 2px; font-size: 14px; }
.pal-tools { display: flex; align-items: center; height: 21px; margin-top: 11px; padding-left: 3px; }
.t-folder { margin-left: 7px; }
.t-sep { width: 1px; height: 22px; background: #596270; margin: 0 8px 0 9px; }
.t-new { margin-left: 41px; }
.pal-tools .t-new ~ svg { margin-left: 7px; }
.t-spring { flex: 1; }
.pal-tools .t-spring ~ svg { margin-left: 7px; }
.pal-tools .t-spring + svg { margin-left: 0; margin-right: 2px; }
.pal-tools .t-gear { margin-left: 8px; margin-right: 20px; }
.pal-body { display: flex; margin-top: 4px; height: 105px; }

.filters { width: 119px; flex: none; display: flex; flex-direction: column; margin-right: 5px; border: 1px solid #2c3440; }
.f-head { height: 28px; display: flex; align-items: center; justify-content: space-between; padding: 0 6px; border-bottom: 1px solid #2c3440; }
.dbl { font-size: 24px; line-height: 18px; font-weight: 700; color: #d6d6d6; margin-top: -4px; }
.f-tree { height: 48px; background: #333b48; display: flex; flex-direction: column; border-bottom: 1px solid #2c3440; }
.f-tree-top { height: 26px; display: flex; align-items: flex-start; }
.f-dots { width: 13px; height: 12px; margin: 5px 0 0 37px; border-left: 1px dotted #c9c9c9; border-bottom: 1px dotted #c9c9c9; }
.f-fold { margin: 8px 0 0 3px; }
.f-all { margin: 7px 0 0 5px; font-size: 14.6px; }
.f-patch { margin-left: auto; width: 21px; height: 21px; margin-top: 5px; background: #f0f0f0; }
.f-tree-bot { height: 21px; background: #f0f0f0; display: flex; align-items: center; }
.f-thumb { width: 29px; height: 3px; margin-left: 21px; background: #808080; }
.f-corner { width: 20px; height: 20px; margin-left: auto; border-right: 1px solid #666; border-bottom: 1px solid #666; }
.f-inv { flex: 1; display: flex; align-items: center; padding: 0 6px 3px; }
.f-check { width: 14px; height: 14px; background: #f0f0f0; border-radius: 3px; flex: none; }
.f-inv-t { margin-left: 5px; margin-right: auto; font-size: 14.6px; }

.grid-wrap { width: 800px; display: grid; grid-template-columns: 779px 21px; grid-template-rows: 84px 21px; }
.table { overflow: hidden; background: #333b48; font-size: 14.15px; }
.row { display: grid; column-gap: 1px; align-items: center; grid-template-columns: 22px 91px 1px 22px 22px 22px 22px 22px 59px 59px 79px 79px 84px 84px 67px 29px; height: 23px; white-space: nowrap; }
.row > b { height: 100%; margin: 0 -1px; background: #2c3440; }
.row > span { padding-left: 3px; overflow: hidden; }
.row.head { height: 29px; background: #2c3440; color: #d2d7dd; align-items: stretch; font-size: 14px; }
.row.head > span { background: #3f4a5b; padding-left: 5px; line-height: 30px; overflow: visible; }
.row.head > span.vpt { padding-left: 4px; }
.name-h { display: flex; align-items: center; padding-right: 4px; }
.sort { margin-left: auto; width: 0; height: 0; border: 4px solid transparent; border-top: 0; border-bottom: 5px solid #d6d6d6; }
.r1 { background: #333b48; }
.r2 { background: #6c81a3; }
.row > .ic { padding: 0; display: flex; justify-content: center; align-items: center; }
.row > .nm { padding-left: 3px; }
.col { display: flex; align-items: center; }
.row > .col { padding-left: 3px; }
.sw { width: 16px; height: 16px; margin-right: 3px; border: 1px solid #c9c9c9; flex: none; }
.yel { background: #ffff00; }
.blk { background: #262626; }
.cya { background: #19e8f0; }
.row > .lw { display: flex; align-items: center; padding-left: 1px; }
.ln { width: 27px; height: 1px; background: #e4e7ea; margin-right: 6px; flex: none; }
.row > span:nth-last-child(-n+2) { padding-left: 4px; }
.vscroll { background: #f0f0f0; padding: 25px 0 0 9px; }
.vthumb { display: block; width: 3px; height: 21px; background: #808080; }
.hscroll { grid-column: 1 / span 2; background: #f0f0f0; padding: 9px 0 0 21px; }
.hthumb { display: block; width: 488px; height: 3px; background: #808080; }
.pal-status { margin: 22px 0 0 5px; font-size: 14.4px; }

/* ribbon */
.ribbon { flex: 1; display: flex; flex-direction: column; }
.rtabs { height: 30px; background: #222933; display: flex; align-items: flex-end; padding-left: 4px; color: #b9bfc7; font-size: 14.15px; }
.rtab { height: 25px; padding: 0 12px; line-height: 26px; white-space: nowrap; }
.rtab.on { width: 64px; background: #3b4453; color: #e8ebee; padding-left: 11px; margin-right: 1px; }
.rt-ann { margin-left: -2px; }
.rt-out { margin-left: 2px; }
.rt-exp { margin-left: 2px; }
.r-more { margin: 0 0 8px 2px; }
.r-min { width: 19px; height: 9px; background: #eee; margin: 0 0 8px 11px; display: flex; justify-content: center; align-items: center; }
.r-min i { width: 0; height: 0; border: 3px solid transparent; border-top: 0; border-bottom: 4px solid #666; }
.r-minc { margin: 0 0 10px 5px; }
.rpanels { height: 123px; display: flex; gap: 3px; background: #2c3440; align-items: center; }
.draw { width: 279px; height: 123px; background: #3b4453; display: flex; flex-direction: column; flex: none; margin-right: -2px; }
.draw-tools { display: flex; height: 102px; padding: 6px 0 0 5px; }
.tool { display: flex; flex-direction: column; align-items: center; }
.tool span { margin-top: 3px; }
.t3 span, .t4 span { margin-top: 4px; }
.t1 { width: 45px; } .t2 { width: 61px; } .t3 { width: 62px; } .t4 { width: 52px; }
.t-car { margin-top: 6px; }
.t-small { flex: 1; padding: 0 0 0 4px; display: flex; flex-direction: column; }
.ts-row { height: 30px; display: flex; align-items: center; }
.ts-row:nth-child(3) { margin-top: 1px; }
.ts-car { margin-left: 10px; }
.draw-foot { display: flex; align-items: center; justify-content: center; gap: 5px; margin-top: 2px; padding-left: 5px; height: 18px; }
.pnl { width: 73px; height: 120px; background: #4a5568; display: flex; flex-direction: column; align-items: center; flex: none; }
.pnl-ic { height: 46px; margin-top: 2px; display: flex; align-items: center; justify-content: center; }
.pnl > span { margin-top: 3px; }
.car { margin-top: 41px; }
.big-a { font-family: "Liberation Sans", sans-serif; font-size: 52px; line-height: 46px; color: #d6d6d6; }
.dtabs { height: 34px; background: #222933; display: flex; align-items: flex-end; padding-left: 12px; }
.slash { width: 1px; height: 20px; background: #5a626e; transform: skewX(-20deg); flex: none; margin-bottom: 6px; }
.dt-start { margin: 0 0 5px 18px; }
.dt-on { margin-left: 12px; width: 200px; height: 30px; background: #3b4453; display: flex; align-items: center; clip-path: polygon(10px 0, 100% 0, 190px 100%, 0 100%); padding: 2px 0 0 17px; font-weight: 700; color: #f0f2f4; }
.dt-on svg { margin-left: 11px; }
.dt-plus { margin: 0 0 7px 13px; }
.s2 { margin-left: 16px; }

/* canvas */
.canvas { flex: 1; position: relative; background: #8a8a8a; overflow: hidden; }
.paper { position: absolute; left: 420px; top: 96px; width: 962px; height: 680px; background: #fff; border: 1px solid #444; box-shadow: -3px 0 4px rgba(0,0,0,.12), 3px 3px 4px rgba(0,0,0,.15); padding: 10px 10px 9px; display: flex; }
.frame { flex: 1; border: 3px solid #2b2b2b; }
.cross { position: absolute; left: 162px; top: 352px; width: 97px; height: 97px; }
.cr-h { position: absolute; left: 0; top: 48px; width: 97px; height: 1px; background: #000; }
.cr-v { position: absolute; left: 48px; top: 0; width: 1px; height: 97px; background: #000; }
.cr-b { position: absolute; left: 45px; top: 45px; width: 7px; height: 7px; border: 1px solid #000; background: #8a8a8a; }
.vp-ctl { position: absolute; left: 1845px; top: 10px; width: 65px; height: 15px; display: flex; justify-content: space-between; align-items: center; }
.navbar { position: absolute; left: 1876px; top: 312px; width: 41px; height: 161px; background: #a3a3a3; border: 1px solid #6e6e6e; border-radius: 5px; overflow: hidden; }
.navbar svg { margin: -1px; }
.cmd { position: absolute; left: 391px; top: 821px; width: 1140px; height: 33px; display: flex; }
.cmd-tools { width: 71px; background: #4a5361; border-radius: 4px 0 0 4px; display: flex; align-items: center; padding-left: 5px; }
.cmd-grip { width: 5px; height: 21px; background-image: radial-gradient(#c9c9c9 45%, transparent 50%); background-size: 2.500px 3px; }
.cmd-tools svg:nth-child(2) { margin-left: 9px; }
.cmd-tools svg:nth-child(3) { margin-left: 15px; margin-right: 0; }
.cmd-input { flex: 1; background: #dcdcdc; border: 1px solid #4a4a4a; border-left: 0; border-radius: 0 3px 3px 0; display: flex; align-items: center; padding: 0 4px 0 5px; }
.cmd-c { margin-left: 2px; }
.cmd-t { margin: 2px 0 0 9px; font-family: "Liberation Mono", monospace; font-style: italic; font-size: 15px; color: #777; }
.cmd-up { margin-left: auto; margin-right: 1px; }

/* status bar */
.status { height: 38px; flex: none; border-top: 5px solid #3b4453; background: #222933; display: flex; align-items: center; justify-content: space-between; }
.ltabs { display: flex; align-items: center; padding: 0 0 2px 12px; height: 33px; }
.ltabs .slash { margin-bottom: 0; }
.lt { color: #dfe3e8; font-size: 14.4px; }
.lt-m { margin-left: 18px; }
.lt-on { margin: 0 0 -2px 9px; width: 62px; height: 30px; align-self: flex-end; background: #3b4453; clip-path: polygon(12px 0, 100% 0, 50px 100%, 0 100%); display: flex; align-items: center; justify-content: center; font-weight: 700; color: #f0f2f4; padding: 0 0 2px 1px; }
.lt-2 { margin: 0 11px 0 10px; }
.lt-plus { margin: 0 14px 0 18px; }
.sgroups { display: flex; gap: 2px; height: 30px; }
.sg { background: #3b4453; display: flex; align-items: center; justify-content: space-between; }
.g1 { width: 52px; justify-content: center; font-size: 15px; color: #e4e7ea; }
.g2 { width: 30px; justify-content: center; }
.g3 { width: 129px; }
.g4 { width: 81px; }
.g5 { width: 91px; }
.g6 { width: 82px; padding-right: 3px; }
.g7 { width: 32px; justify-content: center; }
.g8 { width: 69px; justify-content: flex-start; padding-left: 2px; }
.g9 { width: 60px; }
.sb { width: 29px; height: 30px; display: flex; align-items: center; justify-content: center; }
.sb.on { background: #5b8fc9; }
.sc { width: 20px; display: flex; justify-content: center; }
```
